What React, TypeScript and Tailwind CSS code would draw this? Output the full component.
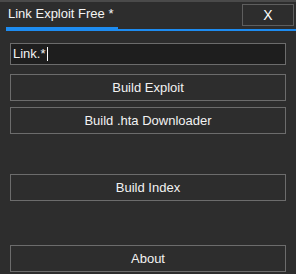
const font = { fontFamily: '"Liberation Sans", Arial, sans-serif' };

function ActionButton({ label, className = "" }: { label: string; className?: string }) {
  return (
    <button
      type="button"
      className={`flex h-[27px] w-full items-center justify-center border border-[#6c6c6c] bg-[#2d2d2d] text-[13px] text-[#f2f2f2] ${className}`}
    >
      {label}
    </button>
  );
}

export default function App() {
  return (
    <div className="flex h-[274px] w-[296px] flex-col overflow-hidden bg-[#2d2d2d]" style={font}>
      <div className="h-[2px] bg-[#4a4a4a]" />

      <div className="flex h-[25px] items-start justify-between">
        <div className="pl-[8px] pt-[4px] text-[13px] leading-[16px] text-[#f4f4f4]">Link Exploit Free *</div>
        <button
          type="button"
          className="mr-[2px] mt-[2px] flex h-[22px] w-[52px] items-center justify-center border border-[#5e5e5e] text-[14px] text-white"
        >
          X
        </button>
      </div>

      <div className="flex h-[5px] items-end">
        <div className="w-[6px]" />
        <div className="h-[4px] w-[112px] self-start bg-[#1e8cf0]" />
        <div className="mb-[0px] h-[2px] flex-1 -translate-y-[1px] bg-[#1e8cf0]" />
      </div>

      <div className="flex flex-col px-[10px]">
        <div className="mt-[11px] flex h-[22px] items-center border border-[#6c6c6c] bg-[#1e1e1e] pl-[2px] text-[13px] text-[#f2f2f2]">
          Link.*<span className="ml-[1px] inline-block h-[14px] w-px bg-white" />
        </div>
        <ActionButton label="Build Exploit" className="mt-[9px]" />
        <ActionButton label="Build .hta Downloader" className="mt-[6px]" />
        <ActionButton label="Build Index" className="mt-[40px]" />
        <ActionButton label="About" className="mt-[44px]" />
      </div>
    </div>
  );
}
